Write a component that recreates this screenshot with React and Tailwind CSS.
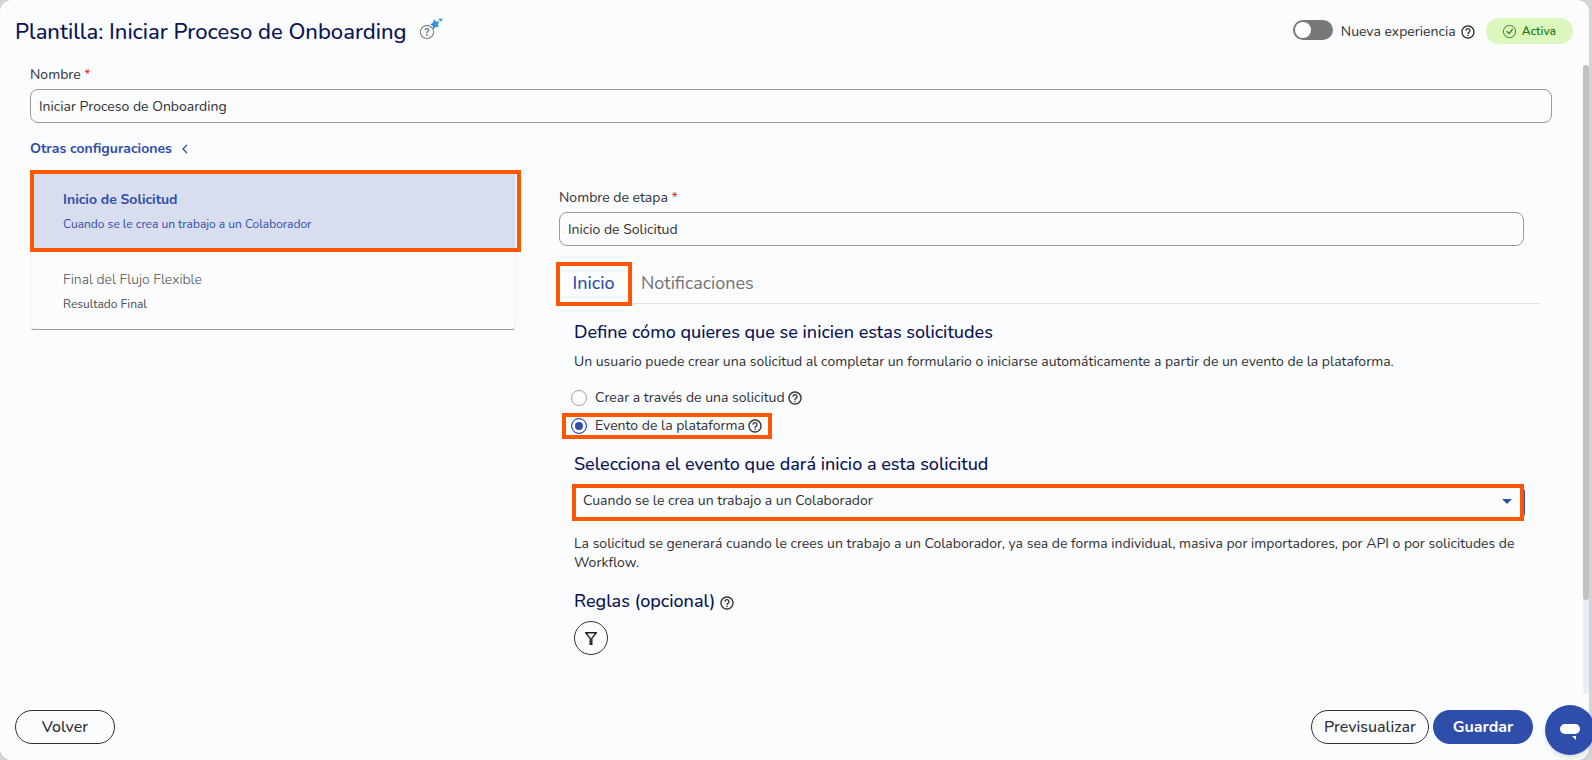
import { useState } from 'react';
import { MdHelpOutline } from 'react-icons/md';
import { BsCheckCircle, BsQuestionCircle } from 'react-icons/bs';

const EVENTS = [
  'Cuando se le crea un trabajo a un Colaborador',
  'Cuando se termina un trabajo de un Colaborador',
];

function Highlight({ className }) {
  return <span className={'absolute border-4 border-[#ff5600] pointer-events-none ' + className} />;
}

function Field({ id, label, value, onChange }) {
  return (
    <div>
      <label htmlFor={id} className="block leading-5 mb-1">
        {label} <span className="text-[#e02b2b]">*</span>
      </label>
      <input
        id={id}
        type="text"
        value={value}
        onChange={(e) => onChange(e.target.value)}
        className="block w-full h-[34px] px-2 rounded-lg border border-[#999a9c] bg-transparent"
      />
    </div>
  );
}

function StartOption({ value, label, checked, onChange }) {
  return (
    <label className="flex items-center h-7 cursor-pointer">
      <input
        type="radio"
        name="inicio"
        value={value}
        checked={checked}
        onChange={() => onChange(value)}
        className="appearance-none w-4 h-4 mr-2 rounded-full border border-[#a3a3a5] checked:border-[#2f4dab] checked:bg-[#2f4dab] checked:shadow-[inset_0_0_0_3px_#fbfcfe]"
      />
      {label}
      <MdHelpOutline className="ml-0.5 text-base" />
    </label>
  );
}

export default function App() {
  const [name, setName] = useState('Iniciar Proceso de Onboarding');
  const [stageName, setStageName] = useState('Inicio de Solicitud');
  const [start, setStart] = useState('evento');
  const [event, setEvent] = useState(EVENTS[0]);
  const [newExperience, setNewExperience] = useState(false);

  return (
    <div className="min-h-screen flex bg-[#d3d4d5] pr-[3px] text-sm text-[#2e3033] font-['Nunito','Open_Sans',sans-serif]">
      <div className="flex-1 min-w-0 flex flex-col rounded-xl bg-[#fbfcfe]">
        <header className="h-[65px] flex items-start justify-between pt-[18px] pl-[15px] pr-4">
          <h1 className="flex items-center text-[22px] leading-7 font-medium text-[#0a1455]">
            Plantilla: Iniciar Proceso de Onboarding
            <span className="relative ml-3.5">
              <BsQuestionCircle className="text-sm text-[#68696b]" />
              <svg viewBox="0 0 13 12" className="absolute -top-[7px] left-2.5 w-[13px] h-3">
                <defs>
                  <linearGradient id="spark" x1="0" x2="1" y1="0" y2="0.4">
                    <stop offset="0.4" stopColor="#2f80f6" />
                    <stop offset="1" stopColor="#3fb3a8" />
                  </linearGradient>
                </defs>
                <path d="M4 1.2 L5.8 3.4 L9.4 3.6 L8.2 6.6 L8.8 9 L5.6 9 L3.2 11.6 L2.8 8 L0.2 6.2 L3.2 4.8 Z" fill="url(#spark)" />
                <path d="M8.8 0.4 L10.4 0.8 L12.8 0.2 L12 2 L11.4 3.4 L10 3 L9 2.2 Z" fill="#35a3e6" />
              </svg>
            </span>
          </h1>
          <div className="flex items-center">
            <label className="flex items-center pt-0.5 cursor-pointer">
              <input
                type="checkbox"
                role="switch"
                checked={newExperience}
                onChange={(e) => setNewExperience(e.target.checked)}
                className="peer sr-only"
              />
              <span className="w-10 h-5 p-0.5 mr-2 mb-1 flex rounded-full bg-[#77787a] peer-checked:bg-[#2f4dab] peer-checked:justify-end">
                <span className="w-4 h-4 rounded-full bg-white" />
              </span>
              Nueva experiencia
              <MdHelpOutline className="ml-1 text-base" />
            </label>
            <span className="ml-2.5 h-[26px] px-[17px] flex items-center gap-1.5 rounded-full bg-[#dcf7bd] text-[#217a12] text-xs font-semibold">
              <BsCheckCircle className="text-[13px]" />
              Activa
            </span>
          </div>
        </header>

        <div className="flex-1 flex">
          <main className="flex-1 min-w-0 pl-[30px] pr-[31px]">
            <Field id="nombre" label="Nombre" value={name} onChange={setName} />
            <button className="flex items-center gap-2 mt-4 font-bold text-[#2f4dab]">
              Otras configuraciones
              <svg viewBox="0 0 8 10" className="w-2 h-2.5" fill="none" stroke="currentColor" strokeWidth="1.3">
                <path d="M7 1 L3 5 L7 9" />
              </svg>
            </button>

            <div className="flex mt-3">
              <aside className="w-[486px] shrink-0">
                <ul className="rounded border-x border-b border-x-[#eeeff1] border-b-[#999a9c]">
                  <li className="relative">
                    <button className="block w-full px-8 pt-[19px] pb-[17px] text-left bg-[#d9deee] text-[#2f4dab]">
                      <span className="block font-bold leading-5">Inicio de Solicitud</span>
                      <span className="block text-xs leading-5 mt-1">Cuando se le crea un trabajo a un Colaborador</span>
                    </button>
                    <Highlight className="-left-px -right-1.5 -top-px h-[82px]" />
                  </li>
                  <li>
                    <button className="block w-full px-8 pt-[19px] pb-[15px] text-left">
                      <span className="block font-light leading-5 text-[#4f5052]">Final del Flujo Flexible</span>
                      <span className="block text-xs leading-5 mt-1 text-[#4a4b4d]">Resultado Final</span>
                    </button>
                  </li>
                </ul>
              </aside>

              <section className="flex-1 min-w-0 pl-[43px] pt-[17px] pr-3">
                <div className="pr-4">
                  <Field id="etapa" label="Nombre de etapa" value={stageName} onChange={setStageName} />
                </div>
                <nav className="flex mt-4 border-b border-[#e0e1e5] text-lg">
                  <button className="relative w-[69px] h-[41px] font-medium text-[#2f4dab]">
                    Inicio
                    <Highlight className="-left-[3px] -right-1 top-0 -bottom-[3px]" />
                  </button>
                  <button className="px-[13px] text-[#717274]">Notificaciones</button>
                </nav>

                <div className="pl-[15px] pr-[15px] pt-4">
                  <h2 className="text-lg leading-6 font-medium text-[#0a1455]">
                    Define cómo quieres que se inicien estas solicitudes
                  </h2>
                  <p className="mt-2 leading-5">
                    Un usuario puede crear una solicitud al completar un formulario o iniciarse automáticamente a partir de
                    un evento de la plataforma.
                  </p>
                  <fieldset className="-ml-[3px] mt-3">
                    <StartOption
                      value="solicitud"
                      label="Crear a través de una solicitud"
                      checked={start === 'solicitud'}
                      onChange={setStart}
                    />
                    <div className="relative w-fit">
                      <StartOption
                        value="evento"
                        label="Evento de la plataforma"
                        checked={start === 'evento'}
                        onChange={setStart}
                      />
                      <Highlight className="-left-[9px] -right-[9px] top-px bottom-px" />
                    </div>
                  </fieldset>

                  <label htmlFor="evento" className="block mt-3 text-lg leading-6 font-medium text-[#0a1455]">
                    Selecciona el evento que dará inicio a esta solicitud
                  </label>
                  <div className="relative mt-2">
                    <select
                      id="evento"
                      value={event}
                      onChange={(e) => setEvent(e.target.value)}
                      className="block w-full h-[37px] px-2 pb-1 appearance-none rounded-lg border border-[#2f4dab]"
                    >
                      {EVENTS.map((e) => (
                        <option key={e}>{e}</option>
                      ))}
                    </select>
                    <svg viewBox="0 0 10 5" className="absolute right-[13px] top-[15px] w-2.5 h-[5px]" fill="#2f4dab">
                      <path d="M0 0 H10 L5 5 Z" />
                    </svg>
                    <Highlight className="-left-0.5 right-px inset-y-0" />
                  </div>
                  <p className="mt-[13px] leading-[19px]">
                    La solicitud se generará cuando le crees un trabajo a un Colaborador, ya sea de forma individual,
                    masiva por importadores, por API o por solicitudes de Workflow.
                  </p>

                  <h2 className="flex items-center mt-[17px] text-lg leading-6 font-medium text-[#0a1455]">
                    Reglas (opcional)
                    <MdHelpOutline className="ml-1 mt-1 text-base text-[#2e3033]" />
                  </h2>
                  <button
                    aria-label="Agregar regla"
                    className="flex items-center justify-center w-[34px] h-[34px] mt-2 rounded-full border border-[#2e3033]"
                  >
                    <svg viewBox="0 0 12 13" className="w-3 h-[13px]" fill="none" stroke="#1d1e20" strokeWidth="1.4">
                      <path d="M0.8 0.8 H11.2 L6.8 6.4 V12.4 H5.2 V6.4 Z" />
                    </svg>
                  </button>
                </div>
              </section>
            </div>
          </main>
          <div className="w-1.5 rounded-full bg-[#e9edf6]">
            <div className="h-[85%] rounded-full bg-[#c0c1c3]" />
          </div>
        </div>

        <footer className="flex items-center gap-1 px-[15px] py-4 pr-14 text-base">
          <button className="w-[100px] h-[34px] mr-auto rounded-full border border-[#2e3033] font-medium">Volver</button>
          <button className="w-[118px] h-[34px] rounded-full border border-[#2e3033] font-medium">Previsualizar</button>
          <button className="w-[100px] h-[34px] rounded-full bg-[#2f4dab] text-white font-bold">Guardar</button>
        </footer>
      </div>

      <button
        aria-label="Abrir chat"
        className="fixed -right-[3px] bottom-[5px] w-[50px] h-[50px] rounded-full bg-[#2f4dab] shadow-md flex items-center justify-center"
      >
        <svg viewBox="0 0 20 16" className="w-5 h-4 mt-1" fill="#fff">
          <rect width="20" height="10" rx="5" />
          <path d="M12 12 H16 V16 Z" />
        </svg>
      </button>
    </div>
  );
}
